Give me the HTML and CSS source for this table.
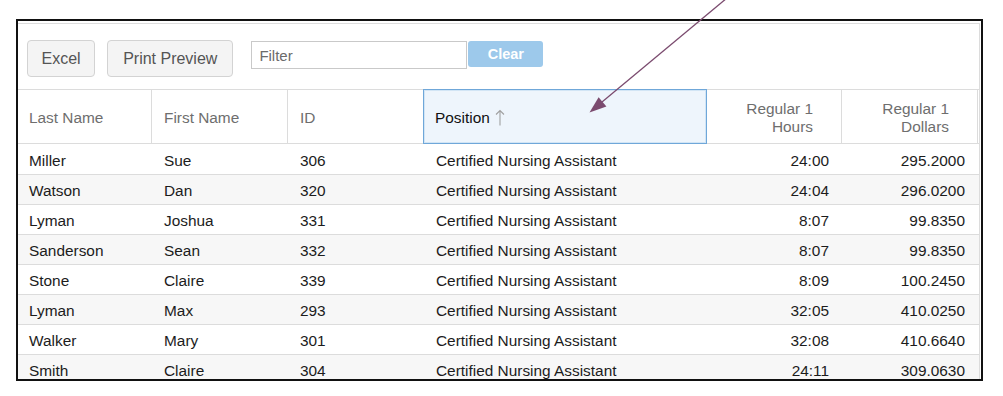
FILE: index.html
```html
<!DOCTYPE html>
<html>
<head>
<meta charset="utf-8">
<link rel="stylesheet" href="styles.css">
</head>
<body>
<div class="frame">
  <div class="widget">
    <div class="toolbar">
      <button class="btn">Excel</button>
      <button class="btn btn-print">Print Preview</button>
      <input class="filter" type="text" placeholder="Filter">
      <button class="clear">Clear</button>
    </div>
    <div class="grid head">
      <div class="th first">Last Name</div>
      <div class="th">First Name</div>
      <div class="th">ID</div>
      <div class="th sorted">Position<svg class="sort-icon" width="10" height="17" viewBox="0 0 10 17"><path d="M5 16.5V1.5M1 5.5L5 1.5L9 5.5" fill="none" stroke="#a0a0a0" stroke-width="1.1"/></svg></div>
      <div class="th num">Regular 1<br>Hours</div>
      <div class="th num">Regular 1<br>Dollars</div>
      <div class="th end"></div>
    </div>
    <div class="body">
      <div class="grid row"><div class="td first">Miller</div><div class="td">Sue</div><div class="td">306</div><div class="td">Certified Nursing Assistant</div><div class="td num">24:00</div><div class="td num">295.2000</div><div class="td"></div></div>
      <div class="grid row"><div class="td first">Watson</div><div class="td">Dan</div><div class="td">320</div><div class="td">Certified Nursing Assistant</div><div class="td num">24:04</div><div class="td num">296.0200</div><div class="td"></div></div>
      <div class="grid row"><div class="td first">Lyman</div><div class="td">Joshua</div><div class="td">331</div><div class="td">Certified Nursing Assistant</div><div class="td num">8:07</div><div class="td num">99.8350</div><div class="td"></div></div>
      <div class="grid row"><div class="td first">Sanderson</div><div class="td">Sean</div><div class="td">332</div><div class="td">Certified Nursing Assistant</div><div class="td num">8:07</div><div class="td num">99.8350</div><div class="td"></div></div>
      <div class="grid row"><div class="td first">Stone</div><div class="td">Claire</div><div class="td">339</div><div class="td">Certified Nursing Assistant</div><div class="td num">8:09</div><div class="td num">100.2450</div><div class="td"></div></div>
      <div class="grid row"><div class="td first">Lyman</div><div class="td">Max</div><div class="td">293</div><div class="td">Certified Nursing Assistant</div><div class="td num">32:05</div><div class="td num">410.0250</div><div class="td"></div></div>
      <div class="grid row"><div class="td first">Walker</div><div class="td">Mary</div><div class="td">301</div><div class="td">Certified Nursing Assistant</div><div class="td num">32:08</div><div class="td num">410.6640</div><div class="td"></div></div>
      <div class="grid row"><div class="td first">Smith</div><div class="td">Claire</div><div class="td">304</div><div class="td">Certified Nursing Assistant</div><div class="td num">24:11</div><div class="td num">309.0630</div><div class="td"></div></div>
    </div>
  </div>
</div>
<svg class="annot" width="1003" height="396" viewBox="0 0 1003 396">
  <line x1="727" y1="-2" x2="602" y2="102" stroke="#7b4b6f" stroke-width="1.3"/>
  <polygon points="589.5,112.5 606.4,106.6 598.6,97.2" fill="#7b4b6f"/>
</svg>
</body>
</html>
```
FILE: styles.css
```css
html, body {
  margin: 0;
  padding: 0;
  background: #fff;
}
body {
  font-family: "Liberation Sans", Arial, sans-serif;
  position: relative;
  width: 1003px;
  height: 396px;
  overflow: hidden;
}
.frame {
  margin: 19px 0 0 16px;
  width: 967px;
  height: 362px;
  border: 2px solid #111;
  box-sizing: border-box;
  overflow: hidden;
}
.widget {
  margin-top: 2px;
  margin-right: 1px;
  border-top: 1px solid #dcdcdc;
  border-right: 1px solid #dcdcdc;
}
.toolbar {
  display: flex;
  align-items: flex-start;
  height: 65px;
  box-sizing: border-box;
  padding: 16px 0 0 9px;
}
.btn {
  height: 37px;
  padding: 0 13.5px;
  font-family: "Liberation Sans", Arial, sans-serif;
  font-size: 16px;
  color: #555;
  background: #f4f4f4;
  border: 1px solid #d3d3d3;
  border-radius: 4px;
  margin: 0 12px 0 0;
}
.btn-print {
  margin-right: 18px;
  padding: 0 15px;
}
.filter {
  width: 216px;
  height: 28px;
  box-sizing: border-box;
  margin: 1px 1px 0 0;
  padding: 0 7px;
  border: 1px solid #c9c9c9;
  border-radius: 0;
  font-family: "Liberation Sans", Arial, sans-serif;
  font-size: 15px;
  color: #333;
  outline: none;
}
.filter::placeholder {
  color: #6b6b6b;
  opacity: 1;
}
.clear {
  width: 75px;
  height: 26px;
  margin-top: 1px;
  border: none;
  border-radius: 3px;
  background: #9dc9eb;
  color: #fff;
  font-family: "Liberation Sans", Arial, sans-serif;
  font-weight: bold;
  font-size: 14.5px;
  padding: 0;
}
.grid {
  display: grid;
  grid-template-columns: 134px 136px 136px 283px 135px 136px 1fr;
}
.head {
  border-top: 1px solid #dcdcdc;
  border-bottom: 1px solid #dcdcdc;
}
.th {
  height: 53px;
  box-sizing: border-box;
  display: flex;
  align-items: center;
  padding: 2px 12px 0 12px;
  border-right: 1px solid #dcdcdc;
  font-size: 15.4px;
  line-height: 18px;
  color: #6e6e6e;
}
.th.first {
  padding-left: 11px;
}
.th.num {
  justify-content: flex-end;
  text-align: right;
  padding-right: 28px;
}
.th.end {
  border-right: none;
  padding: 0;
}
.th.sorted {
  height: auto;
  margin: -1px 0 -1px -1px;
  border: 1px solid #6fa7d9;
  box-shadow: inset 0 0 0 1px #d2e5f5;
  background: #eef5fc;
  color: #111;
  padding-left: 11px;
}
.sort-icon {
  margin-left: 5px;
  margin-top: -1px;
}
.row {
  height: 30px;
  box-sizing: border-box;
  border-bottom: 1px solid #dcdcdc;
}
.row:first-child {
  height: 31px;
}
.row:nth-child(even) {
  background: #f7f7f7;
}
.td {
  display: flex;
  align-items: center;
  padding: 3px 12px 0 12px;
  font-size: 15.4px;
  color: #1c1c1c;
  white-space: nowrap;
}
.td.first {
  padding-left: 11px;
}
.td.num {
  justify-content: flex-end;
  padding-right: 13px;
}
.annot {
  position: absolute;
  left: 0;
  top: 0;
  pointer-events: none;
}
```
